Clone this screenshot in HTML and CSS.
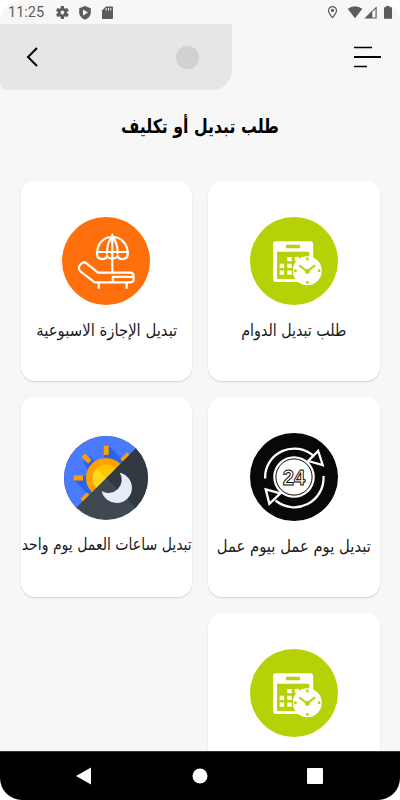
FILE: index.html
```html
<!DOCTYPE html>
<html lang="ar" dir="rtl">
<head>
<meta charset="utf-8">
<title>طلب تبديل أو تكليف</title>
<link rel="stylesheet" href="styles.css">
</head>
<body>
<svg width="0" height="0" class="defs">
  <symbol id="calendar" viewBox="0 0 88 88">
    <circle cx="44" cy="44" r="44" fill="#b7d107"/>
    <rect x="23" y="24.2" width="40.2" height="40.8" rx="3" fill="#fff"/>
    <path fill="#b7d107" d="M36 27.7h14v3.5H36zM27 34.7h32.3V62H27z"/>
    <path fill="#fff" d="M37.3 40h4.4v4.2h-4.4zM44.7 40h4.4v4.2h-4.4zM29.7 46.7h4.4v4.2h-4.4zM37.3 46.7h4.4v4.2h-4.4zM29.7 53.4h4.4v4.4h-4.4zM37.3 53.4h4.4v4.4h-4.4z"/>
    <circle cx="57.3" cy="53.7" r="14.5" fill="#fff"/>
    <path d="M49.2 48.2l8.1 6.2 7.8-6.2" fill="none" stroke="#b7d107" stroke-width="2"/>
    <g fill="#b7d107"><circle cx="57.3" cy="54.4" r="2.4"/><circle cx="57.3" cy="42" r="1.4"/><circle cx="57.3" cy="65.4" r="1.4"/><circle cx="45.5" cy="53.7" r="1.4"/><circle cx="69.1" cy="53.7" r="1.4"/></g>
  </symbol>
</svg>
<div class="screen">
  <div class="status" dir="ltr">
    <span class="time">11:25</span>
    <svg class="status-left" width="60" height="14" viewBox="0 0 60 14" fill="#5c5c5c">
      <g transform="translate(6.4 6.500)"><circle r="3.2" fill="none" stroke="#5c5c5c" stroke-width="2.6"/><path d="M-1.5-6.5h3l.5 3h-4zM-1.5 6.5h3l.5-3h-4z"/><path transform="rotate(60)" d="M-1.5-6.5h3l.5 3h-4zM-1.5 6.5h3l.5-3h-4z"/><path transform="rotate(120)" d="M-1.5-6.5h3l.5 3h-4zM-1.5 6.5h3l.5-3h-4z"/></g>
      <path d="M29 0l5.800 2.200v4c0 3.400-2.400 6.200-5.800 7.400-3.400-1.200-5.800-4-5.800-7.400v-4z"/><path fill="#f7f7f7" d="M27 3.500l5 3-5 3z"/>
      <path d="M50 .5h6q1 0 1 1v10.400q0 1-1 1h-9q-1 0-1-1V4.500z"/><path stroke="#f7f7f7" d="M50.200 2v2.500M52.500 2v2.500M54.800 2v2.500"/>
    </svg>
    <svg class="status-right" width="66" height="14" viewBox="0 0 66 14" fill="#5c5c5c">
      <path d="M5.500 .6a4 4 0 0 1 4 4c0 2.600-4 7-4 7s-4-4.400-4-7a4 4 0 0 1 4-4z" fill="none" stroke="#5c5c5c" stroke-width="1.200"/><circle cx="5.500" cy="4.400" r="1.600"/>
      <path d="M20.700 2.700Q28-2.400 35.400 2.700L28 12.300z"/>
      <path d="M37.300 12.500L49.700 .2V12.500zM45.300 11.500h3.200V2.800l-3.200 3.200z" fill-rule="evenodd"/>
      <path d="M57 1.300h2V0h3.500v1.300H65v11.400h-8z"/>
    </svg>
  </div>
  <header class="header">
    <div class="menu-button"><svg width="28" height="22" viewBox="0 0 28 22"><path d="M0 1.500h18M0 20.500h13" stroke="#000" stroke-width="1.400"/><path d="M0 11h27" stroke="#000" stroke-width="2"/></svg></div>
    <div class="back-panel"><span class="dot"></span><svg class="back" width="14" height="22" viewBox="0 0 14 22"><path d="M12 2L3 11l9 9" fill="none" stroke="#000" stroke-width="2"/></svg></div>
  </header>
  <h1 class="title"><svg width="200" height="44"><text x="100" y="22.500" text-anchor="middle" textLength="158" lengthAdjust="spacingAndGlyphs">طلب تبديل أو تكليف</text></svg></h1>
  <main class="grid">
    <section class="card">
      <svg class="icon"><use href="#calendar"/></svg>
      <svg class="label"><text x="50%" y="17.500" text-anchor="middle" textLength="105" lengthAdjust="spacingAndGlyphs">طلب تبديل الدوام</text></svg>
    </section>
    <section class="card">
      <svg class="icon" viewBox="0 0 88 88">
        <circle cx="44" cy="44" r="44" fill="#ff700d"/>
        <g fill="none" stroke="#fff" stroke-width="2.200" stroke-linejoin="round" stroke-linecap="round">
          <path d="M50.300 17.500v38M35 37C35 27 41 20 50.300 20S65.700 27 65.700 37M45 36c0-7 2-13 5.300-16 3.300 3 5.300 9 5.300 16M35 35h30.700"/>
          <path d="M35 35v2c0 6.500 10 6.500 10 1.500 1 4 9.500 4 10.600 0 0 5 10.100 5 10.100-1.500v-2"/>
          <path d="M36 55.700H68q3.600 0 3.600 3.600v2.400q0 3.600-3.600 3.600H32.700L18.600 54.500c-4.500-4 1.500-11.500 6-8.200zM50.800 65v-5.200h20.500M36.800 66v5M64.700 66v5"/>
        </g>
      </svg>
      <svg class="label"><text x="50%" y="17.500" text-anchor="middle" textLength="141" lengthAdjust="spacingAndGlyphs">تبديل الإجازة الاسبوعية</text></svg>
    </section>
    <section class="card">
      <svg class="icon" viewBox="0 0 88 88">
        <circle cx="44" cy="44" r="44" fill="#080806"/>
        <g fill="none" stroke="#fff" stroke-width="2.300"><path d="M15.100 45.500A29 29 0 0 1 64 23.500M73.500 43A29.300 29.300 0 0 1 25.500 67.500"/><path d="M68.200 18l4.500 14-14.500-4zM15.700 56.300l14.700 4-11 10.500z"/></g>
        <circle cx="44" cy="44" r="20.800" fill="#fff"/><circle cx="44" cy="44" r="18.100" fill="none" stroke="#080806" stroke-width="1"/>
        <text class="number" x="44" y="52" text-anchor="middle" textLength="22.500" lengthAdjust="spacingAndGlyphs" direction="ltr">24</text>
      </svg>
      <svg class="label"><text x="50%" y="17.500" text-anchor="middle" textLength="154" lengthAdjust="spacingAndGlyphs">تبديل يوم عمل بيوم عمل</text></svg>
    </section>
    <section class="card">
      <svg class="icon daynight" viewBox="0 0 84 84">
        <defs><clipPath id="day"><path d="M0 0h84L12.500 71.500 0 84z"/></clipPath><clipPath id="disc"><circle cx="42" cy="42" r="42"/></clipPath></defs>
        <g clip-path="url(#disc)">
          <path fill="#404952" d="M0 0h84v84H0z"/><path fill="#303840" d="M84 0v84L42 42z"/>
          <g clip-path="url(#day)">
            <path fill="#4a7aff" d="M0 0h84v84H0z"/><path fill="#2965eb" d="M44.700 9.700L64 29 42 42l-2.300-23zM26 20l14 14-10 10-11-18zM10 44.300L33 67l9-25-23-2z"/>
            <circle cx="42" cy="42" r="20" fill="#ffa000"/><circle cx="42" cy="42" r="13.500" fill="#ffc400"/><path d="M32.500 32.500L42 42 32.500 51.500a13.500 13.500 0 0 1 0-19z" fill="#ffd91a"/>
            <g fill="#ffa000"><path d="M39.700 9.700h5v9.300h-5zM9.700 39.500H19v5H9.700z"/><path transform="rotate(-45 22.500 22.500)" d="M20 17.800h5v9.400h-5z"/><path transform="rotate(45 61.500 21.500)" d="M59 16.800h5v9.400h-5z"/><path transform="rotate(45 21.500 61.500)" d="M19 56.800h5v9.400h-5z"/></g>
          </g>
          <path d="M55.700 36.700a15.300 15.300 0 1 1-18 18.300A13.200 13.200 0 0 0 55.700 36.700z" fill="#e8ebf8"/>
        </g>
      </svg>
      <svg class="label"><text x="50%" y="17.500" text-anchor="middle" textLength="170" lengthAdjust="spacingAndGlyphs">تبديل ساعات العمل يوم واحد</text></svg>
    </section>
    <section class="card"><svg class="icon"><use href="#calendar"/></svg></section>
  </main>
  <nav class="navbar" dir="ltr">
    <svg width="16" height="18"><path d="M0 9L15 .5v17z" fill="#fff"/></svg>
    <svg width="16" height="16"><circle cx="8" cy="8" r="7.500" fill="#fff"/></svg>
    <svg width="16" height="16"><rect width="16" height="16" rx="1" fill="#fff"/></svg>
  </nav>
</div>
</body>
</html>
```
FILE: styles.css
```css
* { box-sizing: border-box; }
body { margin: 0; background: #fff; font-family: "DejaVu Sans", sans-serif; }
svg { display: block; flex: none; }
.defs { position: absolute; }
.screen { width: 400px; height: 800px; border-radius: 22px; overflow: hidden; background: #f7f7f7; display: flex; flex-direction: column; }
.status { flex: none; height: 24px; display: flex; align-items: center; padding: 1px 7px 0 8px; }
.time { width: 48px; font: 14.500px/24px Roboto, sans-serif; color: #5c5c5c; }
.status-right { margin-left: auto; }
.header { flex: none; height: 66px; display: flex; justify-content: space-between; }
.menu-button { padding: 22px 18px 0 0; }
.back-panel { width: 232px; height: 66px; background: #e6e6e6; border-radius: 0 3px 20px 8px; display: flex; align-items: center; justify-content: space-between; padding: 0 33px 0 25px; }
.dot { width: 23px; height: 23px; border-radius: 50%; background: #d1d1d1; }
.title { flex: none; margin: 20px 0 0; height: 70.500px; display: flex; justify-content: center; font-size: 19.500px; font-weight: bold; }
.title svg, .label { overflow: visible; }
.grid { flex: 1; min-height: 0; overflow: hidden; display: grid; grid-template-columns: 171.500px 171.500px; grid-auto-rows: 200.500px; gap: 15.500px 16px; padding: 0 20.500px; }
.card { background: #fff; border-radius: 14px; box-shadow: 0 1px 1.500px rgba(0,0,0,.16); display: flex; flex-direction: column; align-items: center; padding-top: 36.500px; }
.icon { width: 88px; height: 88px; }
.daynight { width: 84px; height: 84px; margin-top: 2.500px; }
.label { width: 171.500px; height: 34px; margin-top: 12.500px; font-size: 16.500px; fill: #1a1a1a; direction: rtl; }
.daynight + .label { margin-top: 12.500px; }
.number { font: bold 22px "Liberation Sans", sans-serif; fill: #fff; stroke: #080806; stroke-width: 1; }
.navbar { flex: none; height: 49px; background: #000; border-top: 1px solid #333; display: flex; align-items: center; justify-content: space-between; padding: 0 77px 0 76px; }
```
